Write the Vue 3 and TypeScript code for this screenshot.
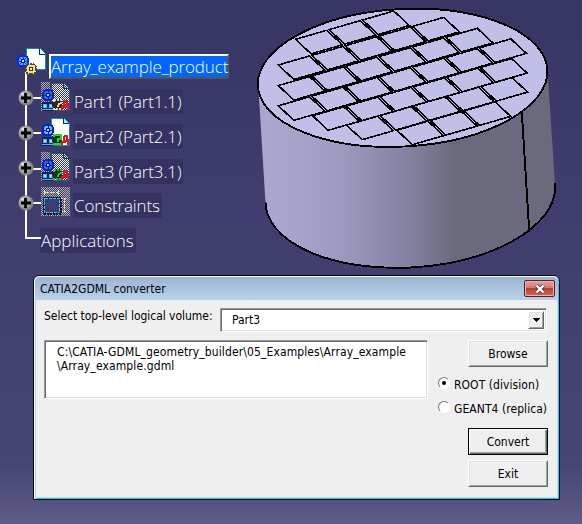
<script setup lang="ts">
import { ref } from 'vue'

interface TreeNode {
  label: string
  kind: 'part' | 'constraint'
  gear: string
  faded: boolean
}

interface TileRow {
  x: number
  y: number
  count: number
}

const nodes: TreeNode[] = [
  { label: 'Part1 (Part1.1)', kind: 'part', gear: '#f0dc90', faded: true },
  { label: 'Part2 (Part2.1)', kind: 'part', gear: '#10e020', faded: false },
  { label: 'Part3 (Part3.1)', kind: 'part', gear: '#10d020', faded: true },
  { label: 'Constraints', kind: 'constraint', gear: '', faded: true },
]

const tileRows: TileRow[] = [
  { x: 295.5, y: 39.3, count: 3 },
  { x: 278.3, y: 65, count: 5 },
  { x: 278.3, y: 85.6, count: 6 },
  { x: 278.3, y: 105.8, count: 7 },
  { x: 312.6, y: 115.8, count: 6 },
  { x: 346.6, y: 125.2, count: 5 },
  { x: 396.8, y: 130.2, count: 3 },
]

const tiles = tileRows.flatMap((row) =>
  Array.from({ length: row.count }, (_, i) => {
    const x = row.x + i * 33.55
    const y = row.y - i * 9.65
    return `M${x} ${y}l31.2 -9l15.6 14.5l-31.2 9z`
  }),
)

const volume = ref('Part3')
const output = ref('C:\\CATIA-GDML_geometry_builder\\05_Examples\\Array_example\n\\Array_example.gdml')
const format = ref<'root' | 'geant4'>('root')
</script>

<template>
  <main class="viewport">
    <svg class="model" width="582" height="274" viewBox="0 0 582 274">
      <defs>
        <linearGradient id="side" gradientUnits="userSpaceOnUse" x1="258" y1="0" x2="556" y2="0">
          <stop offset="0" stop-color="#aaa8cf" />
          <stop offset="0.15" stop-color="#a4a2c8" />
          <stop offset="0.28" stop-color="#9c9abf" />
          <stop offset="0.42" stop-color="#8c8aac" />
          <stop offset="0.53" stop-color="#807e9c" />
          <stop offset="0.61" stop-color="#737288" />
          <stop offset="0.66" stop-color="#6a697e" />
          <stop offset="1" stop-color="#6a697e" />
        </linearGradient>
      </defs>
      <path d="M258.3 86L265.4 201.6A145 73 -3.8 0 0 555.2 187.2L547.5 70z" fill="url(#side)" />
      <path d="M265.4 201.6A145 73 -3.8 0 0 555.2 187.2V183" class="edge" />
      <ellipse cx="402.6" cy="77.8" rx="145" ry="68.7" transform="rotate(-3.2 402.6 77.8)" class="edge face" />
      <path d="M521.8 112L529.3 232" class="edge" />
      <path v-for="d in tiles" :key="d" :d="d" class="tile" />
    </svg>

    <section class="tree">
      <svg class="links" width="60" height="200" viewBox="0 0 60 200" shape-rendering="crispEdges">
        <path d="M26 27V193H41M26 53H41M26 88H41M26 124H41M26 158H41" fill="none" stroke="#fff" stroke-width="2" />
      </svg>
      <div class="root-row">
        <svg class="root-icon" width="30" height="29" viewBox="0 0 30 29" shape-rendering="crispEdges">
          <path d="M10 1H24L29 7V22H10z" fill="#fff" stroke="#0a9098" />
          <path d="M23 1V7H29" fill="#c8ffff" stroke="#0a3050" />
          <circle cx="7" cy="14" r="5.5" fill="#30c0ff" stroke="#1020f0" stroke-width="2" />
          <path d="M7 9V19M2 14H12M3.5 10.5L10.5 17.5M10.5 10.5L3.5 17.5" stroke="#1838e0" />
          <circle cx="7" cy="14" r="2" fill="#b0ffff" stroke="#0a1070" />
          <circle cx="15" cy="22" r="5.5" fill="#f5dc94" stroke="#54431f" stroke-width="2" stroke-dasharray="2 1" />
          <circle cx="15" cy="22" r="2" fill="#fff" stroke="#453616" />
        </svg>
        <span class="selected">Array_example_product</span>
      </div>
      <div v-for="node in nodes" :key="node.label" class="node" :class="node.kind">
        <svg class="plus" width="16" height="16" viewBox="0 0 16 16">
          <circle cx="8" cy="8" r="7.6" fill="#858585" />
          <circle cx="7" cy="7" r="6" fill="#a9a9a9" />
          <circle cx="4.7" cy="4" r="1.6" fill="#dedede" />
          <path d="M7.5 3V13M3 8H13" stroke="#000" stroke-width="2.8" />
        </svg>
        <svg class="icon" width="29" height="29" viewBox="0 0 29 29" shape-rendering="crispEdges">
          <defs>
            <pattern id="mesh" width="2" height="2" patternUnits="userSpaceOnUse">
              <path d="M0 0h1v1h-1zM1 1h1v1h-1z" fill="#b0b0b0" />
            </pattern>
            <pattern id="shade" width="2" height="2" patternUnits="userSpaceOnUse">
              <path d="M0 0h1v1h-1zM1 1h1v1h-1z" fill="#33335f" />
            </pattern>
          </defs>
          <template v-if="node.kind === 'part'">
            <rect v-if="node.faded" width="29" height="29" fill="url(#mesh)" />
            <path d="M10 1H23L28 6V28H10z" fill="#fff" stroke="#0a9098" />
            <path d="M22 1V6H28" fill="#a0f8ff" stroke="#12284c" />
            <rect v-if="node.faded" x="9" width="20" height="29" fill="url(#shade)" />
            <path d="M1 20H12V29H1z" fill="#10205c" />
            <path d="M2 22H5V25H2zM8 22H11V25H8zM1 27.5H12" fill="#a0e8ff" stroke="#48b8f0" />
            <circle cx="7" cy="13" r="5.5" :fill="node.faded ? '#2870d0' : '#58c8ff'" stroke="#1018e8" stroke-width="2" />
            <path d="M7 8V18M2 13H12" stroke="#1020b0" />
            <circle cx="7" cy="13" r="2" fill="#70e8ff" stroke="#0a1070" />
            <path d="M13 17H19L21 19V27H13L11 24V19z" fill="#262633" />
            <path d="M12.5 20V17.5H19.5V22H16.5V25M12 26.5H20" fill="none" :stroke="node.gear" stroke-width="2" :stroke-dasharray="node.faded ? '2 1' : 'none'" />
            <path d="M23 19H26V23H28M23 19V24H27V28M21 28V25H25" fill="none" stroke="#f00c18" stroke-width="1.6" />
          </template>
          <template v-else>
            <path d="M0 0H29V29H19V10H0z" fill="url(#mesh)" />
            <path d="M0 10H2V29H0zM2 27H19V29H2z" fill="url(#mesh)" />
            <path d="M3 5.5H18M3.5 3V8M17.5 3V8M23.5 11V25M20 11.5H26M20 24.5H26" stroke="#fff090" stroke-dasharray="2 1" fill="none" />
            <rect x="2.5" y="10.5" width="17" height="16" fill="#3d3c6c" stroke="#090c22" stroke-width="2" stroke-dasharray="2 1" />
            <rect x="3.5" y="11.5" width="15" height="14" fill="none" stroke="#38c8f0" stroke-dasharray="3 1" />
          </template>
        </svg>
        <span class="label">{{ node.label }}</span>
      </div>
      <div class="apps"><span class="label">Applications</span></div>
    </section>

    <section class="dialog">
      <header class="titlebar">
        <span class="title">CATIA2GDML converter</span>
        <button class="close" aria-label="Close">
          <svg width="12" height="10" viewBox="0 0 12 10">
            <path d="M2.5 1.5L9.5 8.5M9.5 1.5L2.5 8.5" stroke="#47485f" stroke-width="4" />
            <path d="M2.5 1.5L9.5 8.5M9.5 1.5L2.5 8.5" stroke="#fff" stroke-width="2.2" />
          </svg>
        </button>
      </header>
      <div class="body">
        <div class="select-row">
          <span class="caption">Select top-level logical volume:</span>
          <div class="combo sunken">
            <span class="value">{{ volume }}</span>
            <button class="drop" aria-label="Open list">
              <svg width="7" height="4" viewBox="0 0 7 4" shape-rendering="crispEdges"><path d="M0 0H7L3.5 4z" /></svg>
            </button>
          </div>
        </div>
        <div class="columns">
          <div class="output sunken">{{ output }}</div>
          <div class="controls">
            <button class="push">Browse</button>
            <div class="radios">
              <div class="radio" @click="format = 'root'">
                <i class="dot" :class="{ on: format === 'root' }"></i><span>ROOT (division)</span>
              </div>
              <div class="radio" @click="format = 'geant4'">
                <i class="dot" :class="{ on: format === 'geant4' }"></i><span>GEANT4 (replica)</span>
              </div>
            </div>
            <button class="push default">Convert</button>
            <button class="push exit">Exit</button>
          </div>
        </div>
      </div>
    </section>
  </main>
</template>

<style>
body {
  margin: 0;
  overflow: hidden;
}
</style>

<style scoped>
* {
  box-sizing: border-box;
}
.viewport {
  position: relative;
  width: 582px;
  height: 524px;
  overflow: hidden;
  background: linear-gradient(#363564 0, #3c3b6b 150px, #41406f 290px, #464574 465px, #5f5c86 524px);
}
.model {
  position: absolute;
  left: 0;
  top: 0;
}
.edge {
  fill: none;
  stroke: #000;
  stroke-width: 1.9;
  shape-rendering: crispEdges;
}
.face {
  fill: #c0bfe7;
}
.tile {
  fill: none;
  stroke: #000;
  stroke-width: 1.6;
  shape-rendering: crispEdges;
}
.tree {
  position: relative;
  width: 240px;
  padding-top: 47px;
  font: 300 17px/24px 'Open Sans', 'Noto Sans', sans-serif;
  letter-spacing: -0.13px;
  color: #fff;
}
.links {
  position: absolute;
  left: 0;
  top: 45px;
}
.root-row {
  position: relative;
  display: flex;
  height: 35px;
  padding-left: 16px;
}
.selected {
  margin: 7px 0 0 3px;
  width: 180px;
  height: 25px;
  background: #0066ff;
  border: 2px solid #55554f;
  border-top-color: #fff;
  border-left-color: #fff;
  line-height: 22px;
  white-space: nowrap;
}
.node {
  position: relative;
  display: flex;
  height: 35px;
  padding-left: 18px;
}
.plus {
  margin: 8px 7px 0 0;
}
.icon {
  margin-right: 3px;
}
.label {
  align-self: flex-start;
  margin-top: 7px;
  height: 25px;
  padding: 1px 2px 0 1px;
  border-radius: 2px;
  background: #333260;
  white-space: nowrap;
}
.constraint .label,
.apps .label {
  margin-top: 6px;
}
.apps {
  display: flex;
  height: 35px;
  padding-left: 40px;
  letter-spacing: 0;
}
.dialog {
  position: absolute;
  left: 33px;
  top: 275px;
  width: 527px;
  height: 225px;
  border: 1px solid #050510;
  border-radius: 6px 6px 0 0;
  background: #efefef;
  box-shadow: inset 1px 1px #f7fbff, inset 2px 0 #bdd3ec, inset -1px -1px #25c6ec, inset -2px -2px #b9dff2;
  font: 12px/14px 'DejaVu Sans Condensed', 'DejaVu Sans', sans-serif;
  color: #000;
}
.titlebar {
  display: flex;
  justify-content: space-between;
  height: 23px;
  margin: 1px 1px 0;
  padding: 4px 3px 0 5px;
  border-radius: 5px 5px 0 0;
  background: linear-gradient(#9bb4d2, #b9d1ea);
}
.title {
  padding-top: 1px;
}
.close {
  display: flex;
  align-items: center;
  justify-content: center;
  width: 31px;
  height: 17px;
  margin-top: -1px;
  padding: 0;
  border: 1px solid #5a1f2a;
  border-radius: 2px;
  box-shadow: inset 0 0 0 1px #eab3a9;
  background: linear-gradient(#e6a195 0, #d4796a 48%, #bc402c 50%, #cf6d55 100%);
}
.body {
  padding: 8px 12px 0 10px;
}
.select-row {
  display: flex;
  height: 32px;
}
.caption {
  width: 176px;
  padding-top: 1px;
  letter-spacing: -0.03px;
  white-space: nowrap;
}
.sunken {
  background: #fff;
  border: 1px solid;
  border-color: #9c9c9c #fff #fff #9c9c9c;
  box-shadow: inset 1px 1px #696969, inset -1px -1px #e1e1e1;
}
.combo {
  display: flex;
  justify-content: space-between;
  width: 327px;
  height: 24px;
  padding: 2px 2px 2px 11px;
}
.value {
  padding-top: 2px;
}
.push,
.drop {
  font: inherit;
  color: #000;
  border: 1px solid;
  border-color: #fff #696969 #696969 #fff;
  box-shadow: inset 1px 1px #e3e3e3, inset -1px -1px #a0a0a0;
  background: #efefef;
  padding: 0;
}
.drop {
  display: flex;
  align-items: center;
  justify-content: center;
  width: 16px;
}
.columns {
  display: flex;
  justify-content: space-between;
}
.output {
  width: 384px;
  height: 59px;
  padding: 4px 0 0 12px;
  letter-spacing: 0.115px;
  white-space: pre;
}
.controls {
  display: flex;
  flex-direction: column;
  align-items: flex-end;
  width: 115px;
  margin-right: -2px;
  padding-right: 1px;
}
.push {
  width: 80px;
  height: 27px;
}
.radios {
  width: 110px;
  height: 61px;
  padding-top: 10px;
  letter-spacing: 0.06px;
}
.radio {
  display: flex;
  gap: 4px;
  height: 24px;
  white-space: nowrap;
}
.radio span {
  padding-top: 1px;
}
.dot {
  flex: none;
  position: relative;
  width: 12px;
  height: 12px;
  border-radius: 50%;
  background: #fff;
  border: 1.5px solid;
  border-color: #777 #fff #fff #777;
}
.dot.on::after {
  content: '';
  position: absolute;
  left: 3px;
  top: 3px;
  width: 4px;
  height: 4px;
  border-radius: 50%;
  background: #000;
}
.default {
  outline: 1px solid #000;
  outline-offset: -1px;
  border-color: #000;
  box-shadow: inset 1px 1px #fff, inset -1px -1px #696969, inset -2px -2px #a0a0a0;
}
.exit {
  margin-top: 5px;
}
</style>
